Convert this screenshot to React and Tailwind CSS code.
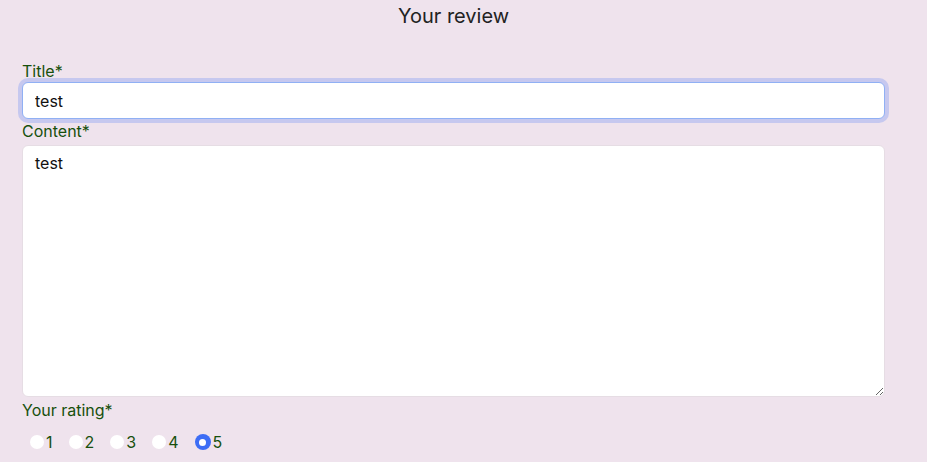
import React from 'react';

export default function App() {
  const ratings = [1, 2, 3, 4, 5];
  return (
    <div className="min-h-[462px] w-full bg-[#efe3ed] font-['Inter',sans-serif] text-[16px]">
      <div className="w-[863px] ml-[22px]">
        <h2 className="pt-[2px] text-center text-[20px] leading-7 text-[#222] font-normal">Your review</h2>
        <form className="flex flex-col mt-[31px]">
          <label className="leading-5 text-[#17500c]">Title*</label>
          <input
            defaultValue="test"
            className="mt-[1px] h-[37px] w-full rounded-[6px] border border-[#90b0f4] bg-white px-[12px] leading-5 text-[#111] outline-none shadow-[0_0_0_4px_#c6c8ef]"
          />
          <label className="mt-[2px] leading-5 text-[#17500c]">Content*</label>
          <textarea
            defaultValue="test"
            className="mt-[4px] h-[252px] w-full rounded-[6px] border border-[#e6dde4] bg-white px-[12px] pt-[7px] pb-[5px] leading-5 text-[#111] outline-none"
          />
          <label className="mt-[3px] leading-5 text-[#17500c]">Your rating*</label>
          <div className="mt-[12px] ml-[8px] flex items-center">
            {ratings.map((r) => (
              <label key={r} className="mr-[16px] flex items-center leading-5 text-[#17500c]">
                {r === 5 ? (
                  <span className="flex h-[16px] w-[16px] items-center justify-center rounded-full bg-[#3d6df5]">
                    <span className="h-[7px] w-[7px] rounded-full bg-white" />
                  </span>
                ) : (
                  <span className="h-[14px] w-[14px] rounded-full bg-white" />
                )}
                <span className="ml-[2px]">{r}</span>
              </label>
            ))}
          </div>
        </form>
      </div>
    </div>
  );
}
